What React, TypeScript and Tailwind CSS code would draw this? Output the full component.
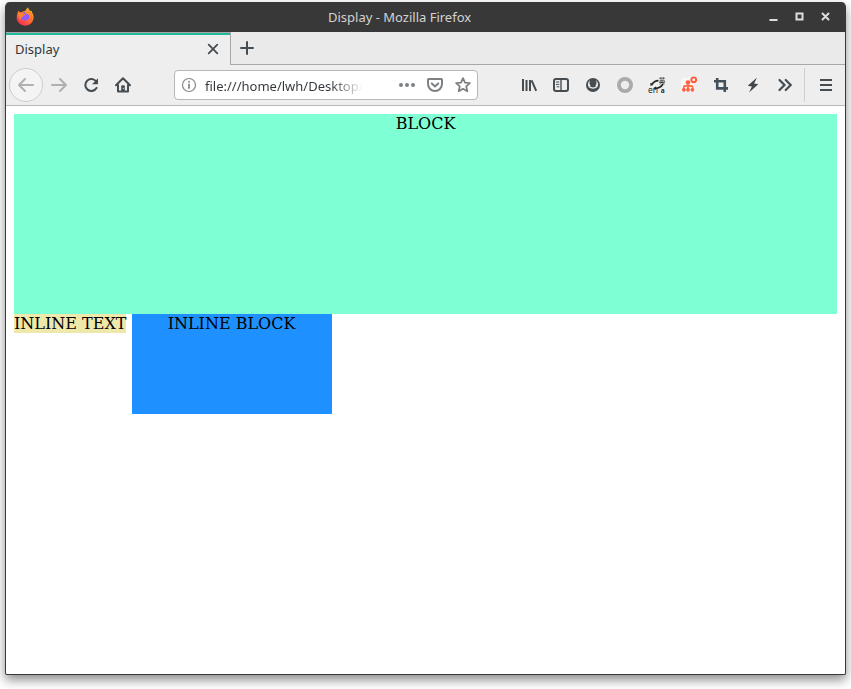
import type { ReactNode } from "react";

const ink = "#464d52";

function Btn({ children }: { children: ReactNode }) {
  return <button className="flex h-8 w-8 shrink-0 items-center justify-center">{children}</button>;
}

function Svg({ children, color = ink, width = 2 }: { children: ReactNode; color?: string; width?: number }) {
  return (
    <svg width="16" height="16" viewBox="0 0 16 16" fill="none" stroke={color} strokeWidth={width} strokeLinecap="round" strokeLinejoin="round" className="shrink-0 overflow-visible">
      {children}
    </svg>
  );
}

function FirefoxLogo() {
  return (
    <svg width="20" height="20" viewBox="0 0 20 20" className="shrink-0">
      <defs>
        <linearGradient id="flame" x1="0.8" y1="0.1" x2="0.25" y2="0.9">
          <stop offset="0" stopColor="#ffbd2e" />
          <stop offset="0.5" stopColor="#ff7139" />
          <stop offset="1" stopColor="#f5334e" />
        </linearGradient>
        <linearGradient id="tail" x1="0" y1="0" x2="0" y2="1">
          <stop offset="0" stopColor="#ffa51f" />
          <stop offset="1" stopColor="#ff5d32" />
        </linearGradient>
      </defs>
      <path d="M3.5 3.8 5.2 5.8 7 5.1C8 4.2 9.4 3.8 10.5 4L13 .4c.5 1.7 1.3 2.6 2.5 3.7l1-.4c.1 1 .5 1.7 1.1 2.7.9 1.6 1.2 3.4.9 5.2-.7 4.2-4 7.1-8.3 7.1-4.8 0-8.5-3.6-8.5-8.1 0-2.5.6-4.8 1.8-7Z" fill="url(#flame)" />
      <circle cx="10.2" cy="9.2" r="4.3" fill="#9059ff" />
      <path d="M12.8.4c.4 2 1.1 3.1 2.4 4.2 3 2.5 3.1 5.9 1.7 8.4-1.6 2.8-4.8 3.5-7.4 2.5 3.2.3 4.7-2 4.9-4.6.1-2.2-.4-3.5-2.8-4.2-1.9-.7-1.9-3.6 1.2-6.3Z" fill="url(#tail)" />
      <path d="M3 6c2-1.4 4.3-.8 5 .5 1 .1 2 .2 2.5.4-.2.8-1.1 1.1-2 1.5-.3.8-.7 1.4-1.6 1.8-1 .5-1.3 1.6-.8 3.1C4 11.8 3 9 3 6Z" fill="#ff842f" />
    </svg>
  );
}

function TitleBar() {
  return (
    <header className="grid h-[30px] shrink-0 grid-cols-[313px_1fr_auto] items-center rounded-t-[4px] bg-[#383838] pl-[9px] pr-[12px]">
      <div className="pb-px"><FirefoxLogo /></div>
      <span className="text-[13px] leading-[18px] text-[#d3d3d3]">Display - Mozilla Firefox</span>
      <div className="flex items-center justify-end gap-[10px] pb-[2px]">
        <Svg color="#dedede"><path d="M4.5 12h8" strokeLinecap="butt" /></Svg>
        <Svg color="#dedede"><path d="M5.5 5.5h6v6h-6Z" strokeLinejoin="miter" /></Svg>
        <Svg color="#dedede"><path d="m5.5 5.5 6 6m0-6-6 6" /></Svg>
      </div>
    </header>
  );
}

function TabStrip() {
  return (
    <div className="flex h-[33px] shrink-0 bg-[#eaeaea]">
      <div className="flex w-[225px] flex-col border-r border-t border-[#a8a8a8] bg-[#eeeeee]">
        <div className="h-[2px] w-full shrink-0 bg-[#20b99c]" />
        <div className="flex flex-1 items-center justify-between pb-[2px] pl-[9px] pr-[9px]">
          <span className="pb-px text-[13px] leading-[18px] text-[#31363b]">Display</span>
          <Svg width={1.8}><path d="m3.7 3.7 8.6 8.6m0-8.6-8.6 8.6" /></Svg>
        </div>
      </div>
      <div className="flex flex-1 items-center border-b border-[#a8a8a8] pl-[8px]">
        <Svg><path d="M8 2v12M2 8h12" /></Svg>
      </div>
    </div>
  );
}

function AddressBar() {
  return (
    <div className="flex h-[30px] w-[304px] shrink-0 items-center rounded-[4px] border border-[#b7b7b7] bg-white pl-[6px] pr-[6px]">
      <Svg color="#84888b" width={1.2}>
        <circle cx="8" cy="8" r="6.5" />
        <path d="M8 7.4v3.6M8 4.7v.2" strokeWidth="1.8" />
      </Svg>
      <span className="ml-2 mt-[2px] w-[158px] overflow-hidden whitespace-nowrap bg-linear-to-r from-[#31363b] from-80% to-transparent bg-clip-text text-[13px] leading-[18px] text-transparent">
        file:///home/lwh/Desktop/
      </span>
      <div className="ml-auto flex items-center gap-3">
        <Svg color="#7d8184">
          <g fill="#7d8184" stroke="none"><circle cx="2" cy="8" r="2" /><circle cx="8" cy="8" r="2" /><circle cx="14" cy="8" r="2" /></g>
        </Svg>
        <Svg color="#7d8184">
          <path d="M1.6 2h12.8q.6 0 .6.7V7A7 7 0 0 1 1 7V2.7Q1 2 1.6 2Z" />
          <path d="m4.8 6.4 3.2 3 3.2-3" />
        </Svg>
        <Svg color="#7d8184" width={1.8}>
          <path d="m8 1.1 2 4.5 4.9.5-3.7 3.3 1.1 4.9L8 11.8l-4.3 2.5 1.1-4.9-3.7-3.3L6 5.6Z" />
        </Svg>
      </div>
    </div>
  );
}

function LanguageIcon() {
  return (
    <svg width="18" height="18" viewBox="0 0 18 18" className="shrink-0 overflow-visible">
      <g stroke="#222629" fill="none">
        <path d="M3.5 9C5 6.3 7.5 4.6 10.5 4.6M6.5 12.3c3.5 0 7-1.7 8.5-4.3" strokeWidth="1.6" />
        <path d="M11 2.2h6M12.8 1v2.4M15.3 1v2.4M12 4.3h4.3v1.8H12ZM11 6.5h6M14 3.5v3c-.4 1-1.5 1.5-2.5 1.7M14 6.5c.5 1 1.4 1.5 2.6 1.7" strokeWidth=".6" />
      </g>
      <path d="m2.3 6.8.3 3.2 2.8-1.6ZM5.2 12.3l2.8-1.8v3.4Z" fill="#222629" />
      <text x="0" y="17" fontSize="8.5" fontFamily="Noto Sans" fill="#222629">en</text>
      <text x="12.7" y="17" fontSize="6.5" fontWeight="700" fontFamily="Noto Sans" fill="#222629">a</text>
    </svg>
  );
}

function Toolbar() {
  return (
    <nav className="flex h-[41px] shrink-0 items-center border-b border-[#b9b9b9] bg-[#eeeeee] pl-[3px] pr-[3px]">
      <button className="flex h-[34px] w-[34px] shrink-0 items-center justify-center rounded-full border border-[#cecece] bg-[#f4f4f4]">
        <Svg color="#aeb0b1"><path d="M15 8H1.5M7 2 1 8l6 6" /></Svg>
      </button>
      <Btn><Svg color="#aeb0b1"><path d="M1 8h13.5M9 2l6 6-6 6" /></Svg></Btn>
      <Btn>
        <Svg><path d="M13.5 11A6 6 0 1 1 13.2 4.5" strokeWidth="2.1" /><path d="M9 7.2h5.3q.7 0 .7-.7V1.2Z" fill={ink} stroke="none" /></Svg>
      </Btn>
      <Btn>
        <Svg>
          <path d="m1 8.3 7-7 7 7M3 8v6.5h10V8" />
          <path d="M6.2 14V9.2q0-1 1-1h1.6q1 0 1 1V14Z" fill={ink} stroke="none" />
          <path d="M8.3 11.3v.2" stroke="#eee" strokeWidth="1" />
        </Svg>
      </Btn>
      <div className="ml-[35px]"><AddressBar /></div>
      <div className="ml-auto flex items-center">
        <Btn>
          <Svg><path d="M2 2v12M5.5 3v11M9 3v11M10.6 3.3l4.6 10.5" strokeLinecap="butt" /></Svg>
        </Btn>
        <Btn>
          <Svg><rect x="1" y="2" width="14" height="12" rx="2" /><path d="M8 2v12" strokeWidth="1.4" /><path d="M3.3 5h2.6M3.3 7.4h2.6M4 9.8h1.9" strokeWidth="1" /></Svg>
        </Btn>
        <Btn>
          <Svg>
            <circle cx="8" cy="8" r="7" fill={ink} stroke="none" />
            <path d="M5.2 3.3C3.9 4.1 3 5.6 3 7.4c0 .8.2 1.5.5 2.1.9.1 1.8-.2 2.1-.8C4.3 7.3 4.1 4.8 5.2 3.3ZM10.8 3.3C12.1 4.1 13 5.6 13 7.4c0 .8-.2 1.5-.5 2.1-.9.1-1.8-.2-2.1-.8 1.3-1.4 1.5-3.9.4-5.4Z" fill="#eeeeee" stroke="none" />
            <path d="M4.2 9.8c2 1.7 5.6 1.7 7.6 0" stroke="#eeeeee" strokeWidth="1.3" />
          </Svg>
        </Btn>
        <Btn><Svg color="#aaaaaa" width={3.8}><circle cx="8" cy="8" r="6.1" /></Svg></Btn>
        <Btn><LanguageIcon /></Btn>
        <Btn>
          <Svg color="#ff704d">
            <rect x="0" y="1" width="14" height="14" rx="2" fill="#faf7f5" stroke="none" />
            <circle cx="12.7" cy="2.8" r="2.4" stroke="#ff5738" strokeWidth="1.9" />
            <circle cx="7" cy="5.5" r="2.3" fill="#ff603f" stroke="none" />
            <path d="M7 6v6M2.8 12V10q0-1 1-1h6.8q1 0 1 1v2" strokeWidth="1.9" />
            <g fill="#ff603f" stroke="none"><circle cx="2.8" cy="12.8" r="1.9" /><circle cx="7" cy="12.8" r="1.9" /><circle cx="11.4" cy="12.8" r="1.9" /></g>
          </Svg>
        </Btn>
        <Btn>
          <Svg color="#43505b" width={2.6}><path d="M4.2 1v10.4H15M1 4.2h10.8V15" strokeLinecap="butt" strokeLinejoin="miter" /></Svg>
        </Btn>
        <Btn><Svg><path d="M12 .5 2.7 8.7l4.2.8-2.8 6 9.2-8.3-4.2-.8Z" fill="#44474a" stroke="none" /></Svg></Btn>
        <Btn><Svg width={2.2}><path d="m2.5 3 5 5-5 5M8.7 3l5 5-5 5" strokeLinejoin="miter" /></Svg></Btn>
        <div className="ml-[3px] mr-[5px] h-[34px] w-px bg-[#cecece]" />
        <Btn><Svg><path d="M2 3h12M2 8h12M2 13h12" strokeLinecap="butt" /></Svg></Btn>
      </div>
    </nav>
  );
}

export default function App() {
  return (
    <div className="h-[689px] w-[851px] overflow-hidden bg-white pl-[5px] pt-[2px] font-['Noto_Sans',sans-serif]">
      <div className="flex h-[673px] w-[841px] flex-col rounded-t-[5px] rounded-b-[2px] border-x border-b border-[#383838] bg-white shadow-[0_5px_11px_rgba(0,0,0,0.45)]">
        <TitleBar />
        <TabStrip />
        <Toolbar />
        <main className="flex-1 p-2 font-['DejaVu_Serif',serif] text-[16px] leading-[19px] text-black">
          <div className="h-[200px] bg-[#7fffd4] text-center">BLOCK</div>
          <div className="flex items-start gap-[6px]">
            <span className="w-[112px] whitespace-nowrap bg-[#eee8aa]">INLINE TEXT</span>
            <div className="h-[100px] w-[200px] bg-[#1e90ff] pr-px text-center">INLINE BLOCK</div>
          </div>
        </main>
      </div>
    </div>
  );
}
